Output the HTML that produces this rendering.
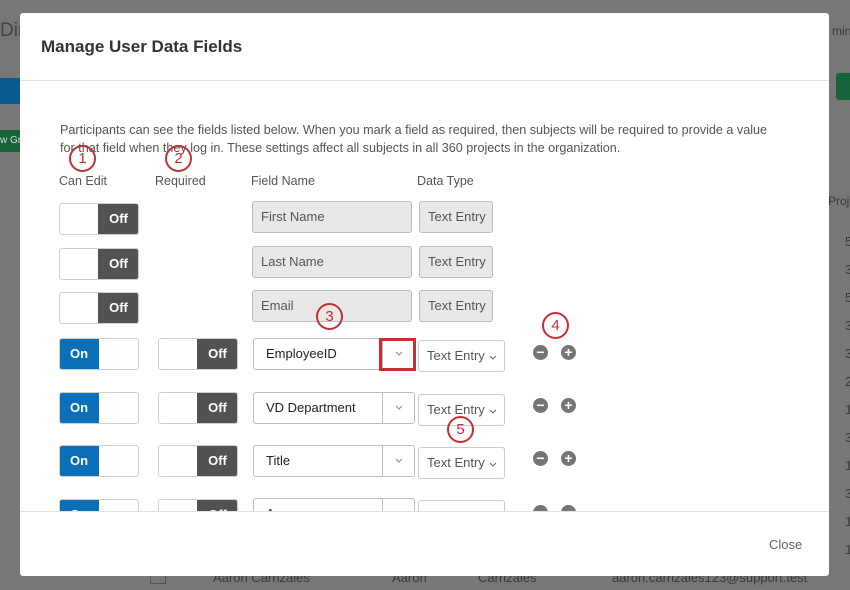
<!DOCTYPE html>
<html><head><meta charset="utf-8"><style>
*{margin:0;padding:0;box-sizing:border-box}
body{width:850px;height:590px;overflow:hidden;background:#777;font-family:"Liberation Sans",sans-serif;position:relative}
.a{position:absolute}
.bgt{color:#3a3a3a;font-size:13px}
.modal{left:20px;top:13px;width:809px;height:563px;background:#fff;border-radius:3px;overflow:hidden}
.tg{position:absolute;width:80px;height:32px;border:1px solid #cfcfcf;border-radius:3px;overflow:hidden;background:#fff}
.tg .off{position:absolute;right:-1px;top:-1px;width:41px;height:32px;background:#525252;color:#fff;font-weight:bold;font-size:13px;line-height:32px;text-align:center;border-radius:0 3px 3px 0}
.tg .on{position:absolute;left:-1px;top:-1px;width:40px;height:32px;background:#0b6fb8;color:#fff;font-weight:bold;font-size:13px;line-height:32px;text-align:center;border-radius:3px 0 0 3px}
.fd{position:absolute;border:1px solid #bdbdbd;border-radius:3px;font-size:13px;color:#555;padding-left:8px;line-height:30px;height:32px}
.gr{background:#e8e8e8}
.sel{background:#fff;color:#222;padding-left:12px}
.sel .ar{position:absolute;right:0;top:0;width:32px;height:30px;border-left:1px solid #bdbdbd}
.ar svg{position:absolute;left:12px;top:12px}
.ty{position:absolute;border:1px solid #ccc;border-radius:3px;font-size:13px;color:#555;height:32px;line-height:30px;padding-left:8px;background:#fff;width:87px}
.ty svg{position:absolute;right:7px;top:14px}
.ci{position:absolute;width:15px;height:15px;border-radius:50%;background:#757575;color:#fff;font-size:14px;line-height:14px;text-align:center;font-weight:bold}
.ann{position:absolute;width:27px;height:27px;border:2px solid #c62f33;border-radius:50%;color:#c62f33;font-size:15px;text-align:center;line-height:23px}
.hd{position:absolute;top:174px;font-size:12.5px;color:#555}
</style></head><body>
<div class="a bgt" style="left:0;top:20px;font-size:19px;color:#444">Dir</div>
<div class="a" style="left:0;top:78px;width:22px;height:26px;background:#0a5a92"></div>
<div class="a" style="left:0;top:130px;width:22px;height:22px;background:#17643a;color:#ddd;font-size:10px;line-height:22px">w Gr</div>
<div class="a bgt" style="left:832px;top:24px;font-size:12px">min</div>
<div class="a" style="left:836px;top:73px;width:20px;height:27px;background:#17643a;border-radius:3px"></div>
<div class="a bgt" style="left:828px;top:194px;font-size:12px">Proj</div>
<div class="a bgt" style="left:845px;top:228px;line-height:28px;font-size:13px">5<br>3<br>5<br>3<br>3<br>2<br>1<br>3<br>1<br>3<br>1<br>1</div>
<div class="a bgt" style="left:213px;top:570px">Aaron Carrizales</div>
<div class="a bgt" style="left:392px;top:570px">Aaron</div>
<div class="a bgt" style="left:478px;top:570px">Carrizales</div>
<div class="a bgt" style="left:612px;top:570px">aaron.carrizales123@support.test</div>
<div class="a" style="left:150px;top:568px;width:16px;height:16px;border:1px solid #555"></div>

<div class="a modal">
<div class="a" style="left:21px;top:24px;font-size:17px;font-weight:bold;color:#333">Manage User Data Fields</div>
<div class="a" style="left:0;top:67px;width:809px;height:1px;background:#e2e2e2"></div>
<div class="a" style="left:0;top:498px;width:809px;height:1px;background:#e2e2e2"></div>
<div class="a" style="left:749px;top:524px;font-size:13px;color:#666">Close</div>
</div>

<div class="a" style="left:20px;top:81px;width:809px;height:430px;overflow:hidden">
<div style="position:absolute;left:-20px;top:-81px;width:850px;height:600px">
<div class="a" style="left:60px;top:121px;font-size:12.6px;color:#555;line-height:18px;width:745px">Participants can see the fields listed below. When you mark a field as required, then subjects will be required to provide a value<br>for that field when they log in. These settings affect all subjects in all 360 projects in the organization.</div>
<div class="hd" style="left:59px">Can Edit</div>
<div class="hd" style="left:155px">Required</div>
<div class="hd" style="left:251px">Field Name</div>
<div class="hd" style="left:417px">Data Type</div>

<div class="tg" style="left:59px;top:203px"><div class="off">Off</div></div>
<div class="fd gr" style="left:252px;top:201px;width:160px">First Name</div>
<div class="fd gr" style="left:419px;top:201px;width:74px">Text Entry</div>

<div class="tg" style="left:59px;top:248px"><div class="off">Off</div></div>
<div class="fd gr" style="left:252px;top:246px;width:160px">Last Name</div>
<div class="fd gr" style="left:419px;top:246px;width:74px">Text Entry</div>

<div class="tg" style="left:59px;top:292px"><div class="off">Off</div></div>
<div class="fd gr" style="left:252px;top:290px;width:160px">Email</div>
<div class="fd gr" style="left:419px;top:290px;width:74px">Text Entry</div>

<div class="tg" style="left:59px;top:338px"><div class="on">On</div></div>
<div class="tg" style="left:158px;top:338px"><div class="off">Off</div></div>
<div class="fd sel" style="left:253px;top:338px;width:162px">EmployeeID<div class="ar"><svg width="8" height="5"><path d="M1 1L4 4L7 1" fill="none" stroke="#888" stroke-width="1"/></svg></div></div>
<div class="ty" style="left:418px;top:340px">Text Entry<svg width="8" height="5"><path d="M1 1L4 4L7 1" fill="none" stroke="#666" stroke-width="1"/></svg></div>
<div class="ci" style="left:533px;top:345px">−</div><div class="ci" style="left:561px;top:345px">+</div>

<div class="tg" style="left:59px;top:392px"><div class="on">On</div></div>
<div class="tg" style="left:158px;top:392px"><div class="off">Off</div></div>
<div class="fd sel" style="left:253px;top:392px;width:162px">VD Department<div class="ar"><svg width="8" height="5"><path d="M1 1L4 4L7 1" fill="none" stroke="#888" stroke-width="1"/></svg></div></div>
<div class="ty" style="left:418px;top:394px">Text Entry<svg width="8" height="5"><path d="M1 1L4 4L7 1" fill="none" stroke="#666" stroke-width="1"/></svg></div>
<div class="ci" style="left:533px;top:398px">−</div><div class="ci" style="left:561px;top:398px">+</div>

<div class="tg" style="left:59px;top:445px"><div class="on">On</div></div>
<div class="tg" style="left:158px;top:445px"><div class="off">Off</div></div>
<div class="fd sel" style="left:253px;top:445px;width:162px">Title<div class="ar"><svg width="8" height="5"><path d="M1 1L4 4L7 1" fill="none" stroke="#888" stroke-width="1"/></svg></div></div>
<div class="ty" style="left:418px;top:447px">Text Entry<svg width="8" height="5"><path d="M1 1L4 4L7 1" fill="none" stroke="#666" stroke-width="1"/></svg></div>
<div class="ci" style="left:533px;top:451px">−</div><div class="ci" style="left:561px;top:451px">+</div>

<div class="tg" style="left:59px;top:499px"><div class="on">On</div></div>
<div class="tg" style="left:158px;top:499px"><div class="off">Off</div></div>
<div class="fd sel" style="left:253px;top:498px;width:162px">A<div class="ar"></div></div>
<div class="ty" style="left:418px;top:500px"></div>
<div class="ci" style="left:533px;top:505px"></div><div class="ci" style="left:561px;top:505px"></div>

<div class="a" style="left:379px;top:338px;width:37px;height:33px;border:3px solid #c62f33"></div>
<div class="ann" style="left:69px;top:145px">1</div>
<div class="ann" style="left:165px;top:145px">2</div>
<div class="ann" style="left:316px;top:303px">3</div>
<div class="ann" style="left:542px;top:312px">4</div>
<div class="ann" style="left:447px;top:416px">5</div>
</div></div>
</body></html>
